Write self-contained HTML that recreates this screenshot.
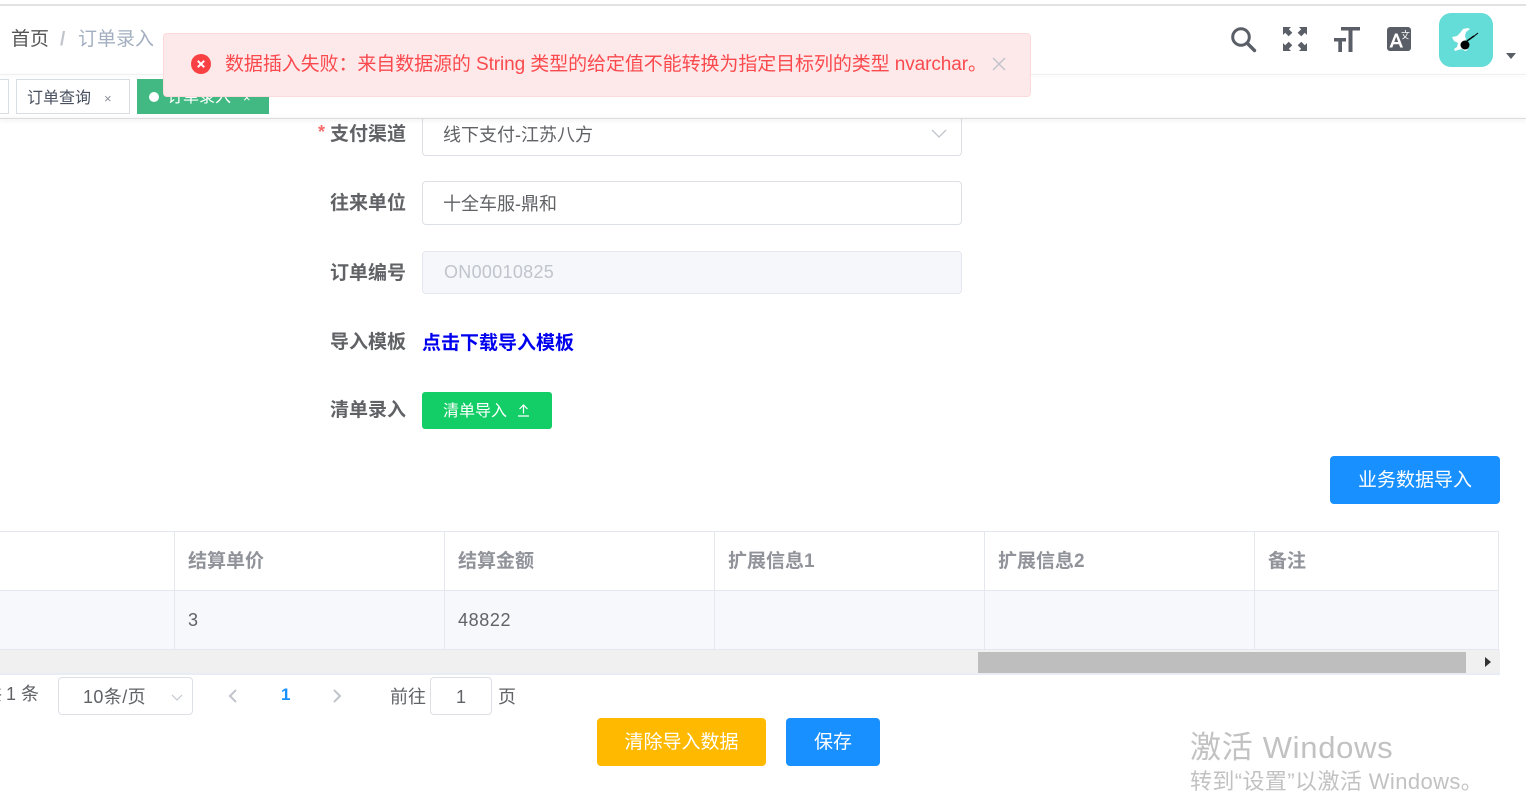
<!DOCTYPE html>
<html><head><meta charset="utf-8">
<style>
html,body{margin:0;padding:0;width:1526px;height:790px;overflow:hidden;background:#fff;font-family:"Liberation Sans","Noto Sans CJK SC",sans-serif;color:#606266}
.a{position:absolute;white-space:nowrap}
.lab{font-size:19px;font-weight:700;color:#606266;line-height:24px;right:1120px}
.inp{position:absolute;left:422px;width:538px;border:1px solid #dcdfe6;border-radius:4px;font-size:18px;padding-left:0;box-sizing:content-box}
.inp span{position:absolute;left:20px;white-space:nowrap}
.th{position:absolute;top:533px;height:58px;line-height:58px;font-size:19px;font-weight:700;color:#909399;box-sizing:border-box;padding-left:13px}
.td{position:absolute;top:591px;height:58px;line-height:58px;font-size:18px;color:#606266;box-sizing:border-box;padding-left:13px}
.v{position:absolute;top:532px;width:1px;height:117px;background:#e4e7ed}
</style></head><body>
<div class="a" style="left:0;top:4px;width:1526px;height:2px;background:#e2e2e2"></div>
<div class="a" style="left:0;top:74px;width:1526px;height:1px;background:#f0f0f0;box-shadow:0 1px 4px rgba(0,21,41,.08)"></div>
<div class="a" style="left:11px;top:28px;font-size:19px;line-height:24px;color:#555">首页</div>
<div class="a" style="left:60px;top:28px;font-size:19px;line-height:24px;color:#c0c4cc;font-weight:700">/</div>
<div class="a" style="left:78px;top:28px;font-size:19px;line-height:24px;color:#a3afc0">订单录入</div>

<!-- form select (sits beneath the tag bar) -->
<div class="a lab" style="top:123px">支付渠道</div>
<div class="a" style="left:318px;top:122px;font-size:18px;line-height:20px;font-weight:700;color:#f56c6c">*</div>
<div class="inp" style="top:119px;height:36px;border-top:none;border-radius:0 0 4px 4px"><span style="top:4px;line-height:24px;color:#606266">线下支付-江苏八方</span>
<svg style="position:absolute;left:508px;top:10px" width="16" height="10" viewBox="0 0 16 10" fill="none" stroke="#c0c4cc" stroke-width="1.300"><path d="M1 1l7 7 7-7"/></svg></div>

<!-- tags -->
<div class="a" style="left:0;top:118px;width:1526px;height:1px;background:#dcdcdf;box-shadow:0 1px 4px rgba(0,0,0,.18)"></div>
<div class="a" style="left:-11px;top:79px;width:18px;height:33px;border:1px solid #d8dce5"></div>
<div class="a" style="left:16px;top:79px;width:112px;height:33px;border:1px solid #d8dce5;font-size:16px;line-height:37px;color:#495060"><span style="margin-left:10px">订单查询</span><span style="position:absolute;left:87px;top:0;font-size:13px;color:#8a8f99">×</span></div>
<div class="a" style="left:137px;top:79px;width:132px;height:35px;background:#42b983;color:#fff;font-size:16px;line-height:38px"><span style="position:absolute;left:12px;top:13px;width:10px;height:10px;border-radius:50%;background:#fff"></span><span style="position:absolute;left:30px">订单录入</span><span style="position:absolute;left:106px;font-size:13px">×</span></div>

<!-- header icons -->
<svg class="a" style="left:1229px;top:25px" width="28" height="28" viewBox="0 0 28 28" fill="none" stroke="#5a5e66" stroke-width="3"><circle cx="12" cy="12" r="8.300"/><path d="M18.500 18.500l7 7" stroke-linecap="round" stroke-width="3.400"/></svg>
<svg class="a" style="left:1283px;top:27px" width="24" height="24" viewBox="0 0 24 24" fill="#5a5e66"><path d="M0 0h8L5.800 2.200 9.300 5.700 5.700 9.300 2.200 5.800 0 8zM24 0v8L21.800 5.800 18.300 9.300 14.700 5.700 18.200 2.200 16 0zM0 24v-8l2.200 2.200L5.700 14.700l3.600 3.600-3.500 3.500L8 24zM24 24h-8l2.200-2.200-3.500-3.500 3.600-3.600 3.500 3.500L24 16z"/></svg>
<svg class="a" style="left:1334px;top:27px" width="26" height="25" viewBox="0 0 26 25" fill="#5a5e66"><path d="M7 0h19v3.500h-7.500V25h-4V3.500H7zM0 11h12v3.500H8V25H4.300V14.500H0z"/></svg>
<svg class="a" style="left:1387px;top:27px" width="24" height="24" viewBox="0 0 24 24"><rect width="24" height="24" rx="3" fill="#5a5e66"/><path d="M2.500 20.500L8 6.500h2.500l5.500 14h-2.800l-1.200-3.300H6.500l-1.200 3.300zM7.300 15h3.900L9.200 9.500z" fill="#fff"/><path d="M14.500 5.500h8M18.500 3v2.500M15.500 12c2.700-1.500 4.300-3.700 5-6.500M16 7c1 2.200 2.700 4 5.500 5" fill="none" stroke="#fff" stroke-width=".8"/></svg>
<div class="a" style="left:1439px;top:13px;width:54px;height:54px;border-radius:12px;background:#64dcd8"></div>
<svg class="a" style="left:1449px;top:25px" width="32" height="30" viewBox="0 0 32 30"><path d="M3 12l5-1 3-3 3-4 5-1 2 1-4 3-1 4 1 3-2 4 1 5 3 2-3 1-3-2-4 1-3 1-1-2 3-2 1-4-4-2z" fill="#fff"/><circle cx="16" cy="20" r="4.500" fill="#000"/><path d="M18 16l7-5" stroke="#000" stroke-width="1.500"/><path d="M24 12l5-4" stroke="#000" stroke-width="1"/></svg>
<div class="a" style="left:1506px;top:53px;width:0;height:0;border-left:5px solid transparent;border-right:5px solid transparent;border-top:6px solid #5a5e66"></div>

<!-- form -->
<div class="a lab" style="top:192px">往来单位</div>
<div class="inp" style="top:181px;height:42px"><span style="top:10px;line-height:24px;color:#606266">十全车服-鼎和</span></div>
<div class="a lab" style="top:262px">订单编号</div>
<div class="inp" style="top:251px;height:41px;background:#f5f7fa;border-color:#e4e7ed"><span style="top:8px;left:21px;line-height:24px;color:#c0c4cc;letter-spacing:.3px">ON00010825</span></div>
<div class="a lab" style="top:331px">导入模板</div>
<div class="a" style="left:422px;top:332px;font-size:19px;line-height:24px;font-weight:700;color:#0000ee">点击下载导入模板</div>
<div class="a lab" style="top:399px">清单录入</div>
<div class="a" style="left:422px;top:392px;width:130px;height:37px;background:#13ce66;border-radius:3px;color:#fff;font-size:16px;line-height:39px"><span style="position:absolute;left:21px">清单导入</span>
<svg style="position:absolute;left:94px;top:11px" width="15" height="15" viewBox="0 0 15 15" fill="none" stroke="#fff" stroke-width="1.200"><path d="M2 13h11M7.500 10.500V2M3.500 6l4-4 4 4"/></svg></div>
<div class="a" style="left:1330px;top:456px;width:170px;height:48px;background:#1890ff;border-radius:4px;color:#fff;font-size:19px;line-height:50px;text-align:center">业务数据导入</div>

<!-- table -->
<div class="a" style="left:0;top:531px;width:1499px;height:1px;background:#e4e7ed"></div>
<div class="a" style="left:0;top:591px;width:1499px;height:58px;background:#f6f8fb"></div>
<div class="a" style="left:0;top:590px;width:1499px;height:1px;background:#e4e7ed"></div>
<div class="a" style="left:0;top:649px;width:1499px;height:1px;background:#e4e7ed"></div>
<div class="v" style="left:174px"></div><div class="v" style="left:444px"></div><div class="v" style="left:714px"></div><div class="v" style="left:984px"></div><div class="v" style="left:1254px"></div><div class="v" style="left:1498px"></div>
<div class="th" style="left:175px;width:270px">结算单价</div>
<div class="th" style="left:445px;width:270px">结算金额</div>
<div class="th" style="left:715px;width:270px">扩展信息1</div>
<div class="th" style="left:985px;width:270px">扩展信息2</div>
<div class="th" style="left:1255px;width:244px">备注</div>
<div class="td" style="left:175px;width:270px">3</div>
<div class="td" style="left:445px;width:270px;letter-spacing:.6px">48822</div>
<!-- scrollbar -->
<div class="a" style="left:0;top:650px;width:1500px;height:23px;background:#f0f0f0"></div>
<div class="a" style="left:978px;top:652px;width:488px;height:21px;background:#bebebe"></div>
<div class="a" style="left:1485px;top:657px;width:0;height:0;border-top:5px solid transparent;border-bottom:5px solid transparent;border-left:6px solid #333"></div>
<div class="a" style="left:0;top:673px;width:1500px;height:2px;background:#e8ecf5"></div>

<!-- pagination -->
<div class="a" style="left:-16px;top:682px;font-size:18px;line-height:24px;color:#606266">共 <span style="margin-left:-1px">1 条</span></div>
<div class="a" style="left:58px;top:677px;width:133px;height:36px;border:1px solid #dcdfe6;border-radius:4px;font-size:18px;line-height:38px;color:#606266"><span style="position:absolute;left:24px;letter-spacing:.4px">10条/页</span>
<svg style="position:absolute;left:112px;top:16px" width="12" height="8" viewBox="0 0 12 8" fill="none" stroke="#c0c4cc" stroke-width="1.100"><path d="M1 1l5 5 5-5"/></svg></div>
<svg class="a" style="left:228px;top:689px" width="10" height="14" viewBox="0 0 10 14" fill="none" stroke="#c0c4cc" stroke-width="2"><path d="M8 1L2 7l6 6"/></svg>
<div class="a" style="left:281px;top:684px;font-size:17px;line-height:22px;font-weight:700;color:#1890ff">1</div>
<svg class="a" style="left:332px;top:689px" width="10" height="14" viewBox="0 0 10 14" fill="none" stroke="#c0c4cc" stroke-width="2"><path d="M2 1l6 6-6 6"/></svg>
<div class="a" style="left:390px;top:685px;font-size:18px;line-height:24px;color:#606266">前往</div>
<div class="a" style="left:430px;top:677px;width:60px;height:36px;border:1px solid #dcdfe6;border-radius:4px;font-size:18px;line-height:38px;text-align:center;color:#606266">1</div>
<div class="a" style="left:498px;top:685px;font-size:18px;line-height:24px;color:#606266">页</div>

<!-- buttons -->
<div class="a" style="left:597px;top:718px;width:169px;height:48px;background:#ffba00;border-radius:4px;color:#fff;font-size:19px;line-height:50px;text-align:center">清除导入数据</div>
<div class="a" style="left:786px;top:718px;width:94px;height:48px;background:#1890ff;border-radius:4px;color:#fff;font-size:19px;line-height:50px;text-align:center">保存</div>

<!-- watermark -->
<div class="a" style="left:1190px;top:728px;font-size:31px;line-height:40px;color:#c2c2c2;letter-spacing:.7px">激活 Windows</div>
<div class="a" style="left:1190px;top:767px;font-size:22px;line-height:30px;color:#c2c2c2;letter-spacing:.4px">转到“设置”以激活 Windows。</div>

<!-- message -->
<div class="a" style="left:163px;top:33px;width:866px;height:62px;background:#fee9ea;border:1px solid #fcd9db;border-radius:4px"></div>
<svg class="a" style="left:191px;top:54px" width="20" height="20" viewBox="0 0 20 20"><circle cx="10" cy="10" r="10" fill="#f94144"/><path d="M6.800 6.800l6.400 6.400M13.200 6.800l-6.400 6.400" stroke="#fff" stroke-width="2"/></svg>
<div class="a" style="left:225px;top:53px;font-size:19px;line-height:24px;color:#fa4a4e;letter-spacing:-.09px">数据插入失败：来自数据源的 String 类型的给定值不能转换为指定目标列的类型 nvarchar。</div>
<svg class="a" style="left:992px;top:57px" width="14" height="14" viewBox="0 0 14 14" fill="none" stroke="#c0c4cc" stroke-width="1.500"><path d="M1 1l12 12M13 1L1 13"/></svg>
</body></html>
